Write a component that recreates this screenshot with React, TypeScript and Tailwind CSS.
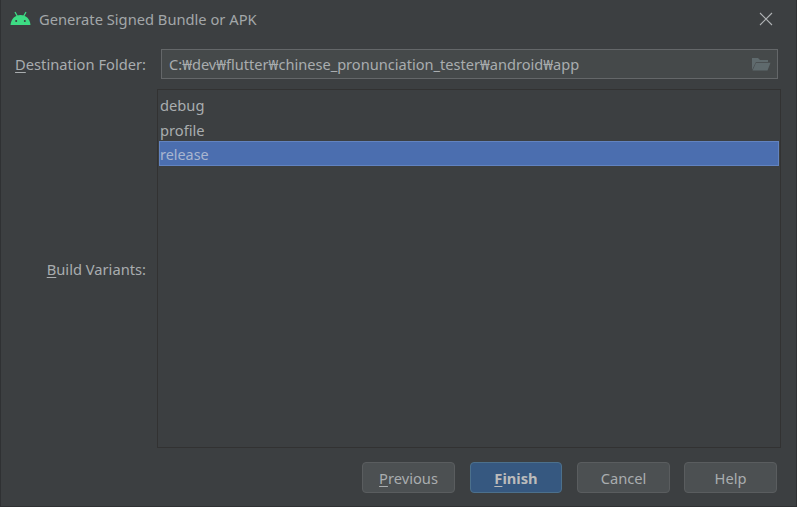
export default function App() {
  const font = { fontFamily: '"Noto Sans", sans-serif' };
  const btn = "w-[93px] h-[31px] pt-[1px] rounded-[4px] border border-[#5a5d5f] bg-[#4c5052] text-[#a9adaf] text-[14.7px] flex items-center justify-center";
  return (
    <div style={font} className="w-[797px] h-[507px] bg-[#3c3f41] border-l border-r border-b border-[#2f3133] flex flex-col overflow-hidden text-[#a9adaf] text-[14.7px] leading-[20px]">
      <div className="h-[38px] shrink-0 flex items-center pl-[9px] pr-[23px]">
        <svg width="21" height="15" viewBox="0 0 21 15" className="mr-[8px] -mt-[2px]">
          <path d="M0.5 14 C1 7.5 5.5 4 10.5 4 C15.5 4 20 7.5 20.5 14 Z" fill="#3ddc84" />
          <path d="M5 1 L7.5 5.5 M16 1 L13.5 5.5" stroke="#3ddc84" strokeWidth="1.3" />
          <circle cx="6.2" cy="10" r="1" fill="#3c3f41" />
          <circle cx="14.8" cy="10" r="1" fill="#3c3f41" />
        </svg>
        <span className="text-[#a3a7a9]">Generate Signed Bundle or APK</span>
        <svg width="14" height="14" viewBox="0 0 14 14" className="ml-auto -mt-[1px]">
          <path d="M1 1 L13 13 M13 1 L1 13" stroke="#b0b3b5" strokeWidth="1.1" />
        </svg>
      </div>
      <div className="flex items-center h-[30px] mt-[11px] shrink-0 pr-[18px]">
        <div className="w-[145px] text-right shrink-0"><span className="underline underline-offset-2">D</span>estination Folder:</div>
        <div className="ml-[15px] flex-1 h-[30px] border border-[#646769] bg-[#45494a] flex items-center pl-[7px] pr-[6px]">
          <span className="text-[14.6px]">C:₩dev₩flutter₩chinese_pronunciation_tester₩android₩app</span>
          <svg width="20" height="16" viewBox="0 0 20 16" className="ml-auto">
            <path d="M1 14 V2 H7 L9 4 H17 V6 H5 Z" fill="#5f6a6d" />
            <path d="M5 6.8 H19.5 L16.5 14.5 H1.5 Z" fill="#5f6a6d" />
          </svg>
        </div>
      </div>
      <div className="flex mt-[10px] h-[359px] shrink-0 pr-[15px]">
        <div className="w-[145px] shrink-0 flex items-center justify-end"><span><span className="underline underline-offset-2">B</span>uild Variants:</span></div>
        <div className="ml-[11px] flex-1 border border-[#323232] bg-[#3c3f41] pt-[1px] px-[1px]">
          <div className="h-[25px] flex items-center pl-[1px] pt-[2px]">debug</div>
          <div className="h-[25px] flex items-center pl-[1px] pt-[2px]">profile</div>
          <div className="h-[25px] flex items-center pl-[1px] pt-[3px] bg-[#4b6eaf] border border-[#6283c0] text-[#a9b6cf] text-[14.4px]"><span className="-ml-[1px]">release</span></div>
        </div>
      </div>
      <div className="flex justify-end gap-[15px] mt-[14px] pr-[19px]">
        <div className={btn}><span><span className="underline underline-offset-2">P</span>revious</span></div>
        <div className="w-[92px] h-[31px] pt-[1px] rounded-[4px] border border-[#4c708c] bg-[#365880] text-[#bbbbbb] text-[14.7px] font-bold flex items-center justify-center"><span><span className="underline underline-offset-2">F</span>inish</span></div>
        <div className={btn}>Cancel</div>
        <div className={`${btn} -ml-[1px]`}>Help</div>
      </div>
    </div>
  );
}
